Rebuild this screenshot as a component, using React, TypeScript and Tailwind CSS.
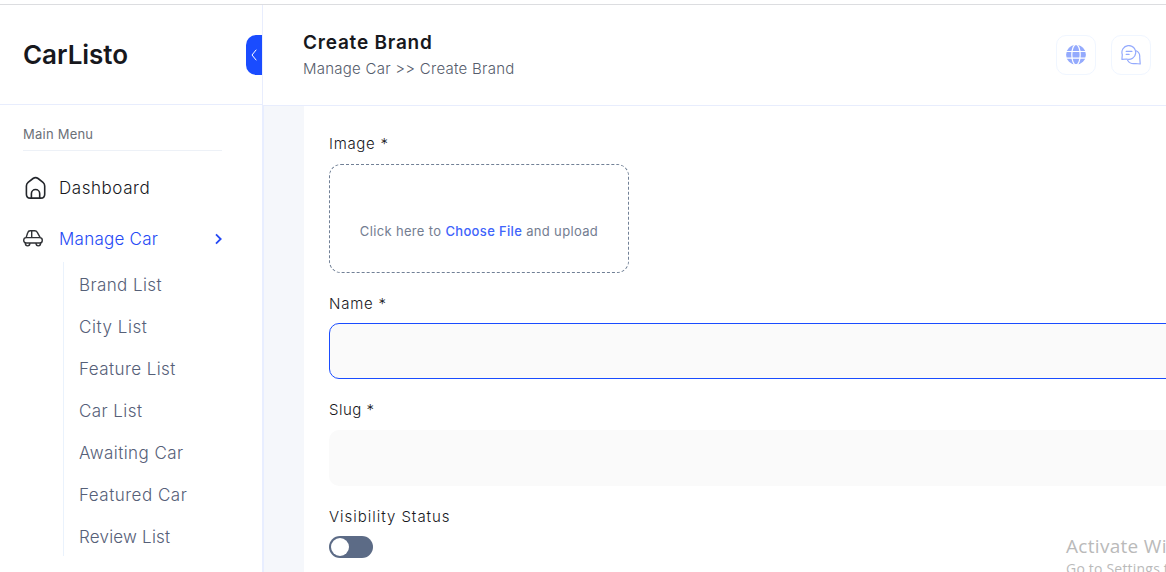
import React from "react";

const submenu = [
  { label: "Brand List", spacing: "tracking-[0.4px]" },
  { label: "City List", spacing: "tracking-[0.55px]" },
  { label: "Feature List", spacing: "tracking-[0.43px]" },
  { label: "Car List", spacing: "tracking-[0.42px]" },
  { label: "Awaiting Car", spacing: "tracking-[0.43px]" },
  { label: "Featured Car", spacing: "tracking-[0.5px]" },
  { label: "Review List", spacing: "tracking-[0.2px]" },
];

function HomeIcon() {
  return (
    <svg className="-mt-px" width="22" height="24" viewBox="0 0 22 24" fill="none" stroke="#23262b" strokeWidth="1.6" strokeLinejoin="round">
      <path d="M1.400 9.900c0-1.600.5-2.600 1.700-3.600L8 2.500c1.800-1.300 3.300-1.300 5.100 0L18 6.300c1.200 1 1.700 2 1.700 3.600v8.300c0 2.500-1.300 3.900-3.800 3.900H5.200c-2.500 0-3.800-1.400-3.800-3.900z" />
      <path d="M6.400 22v-4.300a4.150 4.150 0 0 1 8.300 0V22" />
    </svg>
  );
}

function CarIcon() {
  return (
    <svg className="-mt-0.5" width="20" height="17" viewBox="0 0 20 17" fill="none" stroke="#303236" strokeWidth="1.4" strokeLinejoin="round">
      <path d="M3.100 7.600 4.700 2.800C5.100 1.500 5.900.8 7.200.8h4.500c1.200 0 2 .5 2.600 1.500l2.900 5.300" />
      <path d="M3.300 7.600h13.200c1.900 0 2.800 1 2.800 2.600 0 1.700-1 2.800-2.600 2.800H3.300C1.700 13 .7 12 .7 10.300c0-1.700.9-2.700 2.600-2.700zM8.700.8v6.800" />
      <path d="M2.300 13c0 3.800 4.600 3.800 4.600 0M13 13c0 3.800 4.600 3.800 4.600 0" />
    </svg>
  );
}

function GlobeIcon() {
  return (
    <svg width="20" height="20" viewBox="0 0 20 20">
      <circle cx="10" cy="9.700" r="9.900" fill="#94aafd" />
      <g fill="none" stroke="#fff" strokeWidth="1.200">
        <ellipse cx="10" cy="9.700" rx="4.200" ry="10.200" />
        <path d="M0 6.500h20M0 13.200h20" />
      </g>
    </svg>
  );
}

function ChatIcon() {
  return (
    <svg width="20" height="20" viewBox="0 0 20 20" fill="none" stroke="#94aafd" strokeWidth="1.200" strokeLinecap="round" strokeLinejoin="round">
      <path d="M.9 14.300 1.300 9.700A6.900 6.900 0 1 1 5.700 14z" />
      <path d="M15 5.700c2.500 1.100 4 3.500 3.700 6.400l.5 6.900-4.600-.5c-3.200.6-6.300-.4-8-3.300" />
      <path d="M5.200 6.400h5.700M5.200 9.400h2.900" />
    </svg>
  );
}

export default function App() {
  return (
    <div className="flex h-[572px] w-[1166px] flex-col overflow-hidden bg-white font-['Inter',sans-serif] text-[#17181d]">
      <div className="h-[5px] shrink-0 border-b border-[#dcdde0]" />
      <div className="flex min-h-0 flex-1">
        <aside className="flex w-[262px] shrink-0 flex-col">
          <div className="flex h-[100px] items-center justify-between border-b border-[#e8edfd] pl-[23px]">
            <h1 className="text-[26px] font-semibold tracking-[-0.05px]">CarListo</h1>
            <button className="flex h-10 w-4 items-center justify-center rounded-l-[10px] bg-[#1a4cff]">
              <svg width="6" height="12" viewBox="0 0 6 12" fill="none" stroke="#fff" strokeWidth="1">
                <path d="M5.300.7 1 6l4.300 5.300" />
              </svg>
            </button>
          </div>
          <div className="ml-[23px] flex h-[46px] w-[199px] items-end border-b border-[#edf1f7] pb-[6px] text-[13px] leading-5 text-[#6b7078]">
            <span className="tracking-[0.23px]">Main Menu</span>
          </div>
          <a className="mt-[23px] flex h-7 items-center pl-[25px] text-[17px] font-light">
            <HomeIcon />
            <span className="ml-3 pt-[2px] tracking-[0.55px]">Dashboard</span>
          </a>
          <a className="mt-[23px] flex h-7 items-center pl-[23px] pr-10 text-[17px] font-light text-[#2549f5]">
            <CarIcon />
            <span className="ml-4 flex-1 pt-[2px] tracking-[0.25px]">Manage Car</span>
            <svg className="-mt-px" width="7" height="12" viewBox="0 0 7 12" fill="none" stroke="#2549f5" strokeWidth="1.800">
              <path d="m1 1.300 4.700 4.700L1 10.700" />
            </svg>
          </a>
          <ul className="ml-[63px] mt-[9px] h-[294px] border-l border-[#eaf2fc] pl-[15px] text-[17px] font-light text-[#566078]">
            {submenu.map((item) => (
              <li key={item.label} className="flex h-[42px] items-center pt-[6px]">
                <span className={item.spacing}>{item.label}</span>
              </li>
            ))}
          </ul>
        </aside>
        <div className="flex min-w-0 flex-1 flex-col">
          <header className="flex h-[101px] shrink-0 items-center justify-between border-b border-l border-[#e8edfd] pl-10 pr-[15px]">
            <div>
              <h2 className="text-[19px] font-semibold leading-7 tracking-[0.78px]">Create Brand</h2>
              <p className="text-[15px] font-light leading-6 tracking-[0.25px] text-[#565d6c]">Manage Car &gt;&gt; Create Brand</p>
            </div>
            <div className="flex gap-[15px]">
              <button className="flex size-10 items-center justify-center rounded-[10px] border border-[#f0f6ff]"><GlobeIcon /></button>
              <button className="flex size-10 items-center justify-center rounded-[10px] border border-[#f0f6ff]"><ChatIcon /></button>
            </div>
          </header>
          <main className="flex min-h-0 flex-1 border-l-2 border-[#e8eeff] bg-[#f5f7fb] pl-10">
            <form className="relative min-w-0 flex-1 overflow-hidden bg-white pl-[25px] pt-[26px] text-[15px] leading-6">
              <label className="block font-light tracking-[0.7px]">Image *</label>
              <div className="mt-[8px] flex h-[109px] w-[300px] items-end justify-center rounded-[12px] border border-dashed border-[#718096] pb-[29px] text-[13px] tracking-[0.34px] text-[#737d91]">
                <span>Click here to <span className="font-medium text-[#4064fb]">Choose File</span> and upload</span>
              </div>
              <label className="mt-[19px] block font-light tracking-[0.75px]">Name *</label>
              <div className="mt-[7px] h-14 w-[900px] rounded-[10px] border border-[#1a4cff] bg-[#fafafa]" />
              <label className="mt-[19px] block font-light tracking-[0.5px]">Slug *</label>
              <div className="mt-[8px] h-14 w-[900px] rounded-[10px] bg-[#fafafa]" />
              <label className="mt-[19px] block font-light tracking-[0.97px]">Visibility Status</label>
              <div className="mt-[7px] flex h-[22px] w-11 items-center rounded-full bg-[#5c6b86] pl-[2px]">
                <div className="size-[18px] rounded-full bg-white" />
              </div>
              <div className="absolute left-[762px] top-[427px] whitespace-nowrap font-['Open_Sans',sans-serif] text-[#bababa]">
                <p className="text-[19px] leading-[27px] tracking-[0.3px]">Activate Windows</p>
                <p className="text-[14px] leading-[18px] tracking-[0.2px]">Go to Settings to activate Windows.</p>
              </div>
            </form>
          </main>
        </div>
      </div>
    </div>
  );
}
